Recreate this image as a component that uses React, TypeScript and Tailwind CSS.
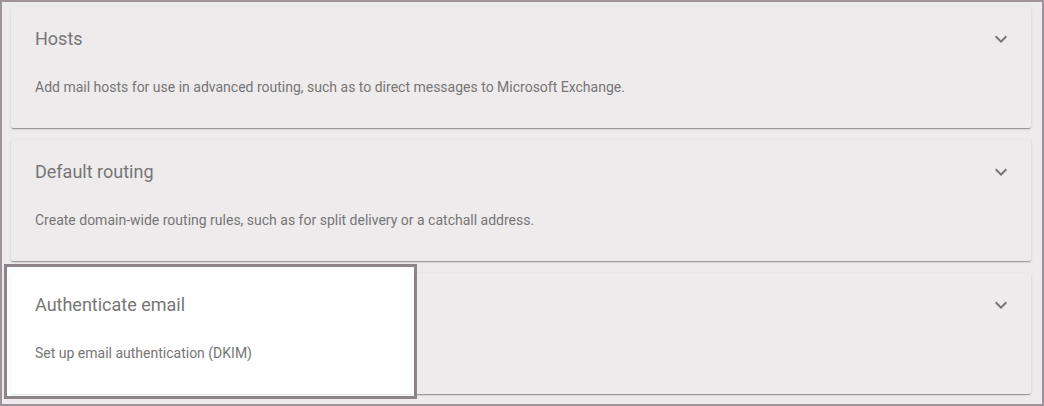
import React from "react";

const Chevron = () => (
  <svg width="24" height="24" viewBox="0 0 24 24" className="shrink-0">
    <path d="M16.59 8.59 12 13.17 7.41 8.59 6 10l6 6 6-6z" fill="#757575" />
  </svg>
);

const shadow =
  "shadow-[0_2px_1px_-1px_rgba(0,0,0,0.2),0_1px_1px_0_rgba(0,0,0,0.14),0_1px_3px_0_rgba(0,0,0,0.12)]";

function Card({
  title,
  desc,
  highlight,
}: {
  title: string;
  desc: string;
  highlight?: boolean;
}) {
  return (
    <div className={`relative h-[121px] rounded-[2px] bg-[#eeebec] ${shadow}`}>
      {highlight && (
        <div className="absolute left-[-7px] top-[-9px] w-[413px] h-[135px] border-[3px] border-[#8f8489] bg-white">
          <div className="absolute left-[4px] top-[6px] right-0 h-[121px] shadow-[0_1px_2px_rgba(0,0,0,0.12)] bg-white" />
        </div>
      )}
      <div className="relative z-10 pl-6 pr-[18px] pt-[20px]">
        <div className="flex items-center justify-between h-6">
          <div className="text-[18px] leading-6 text-[#767676]">{title}</div>
          {!highlight && <Chevron />}
        </div>
        <div className="mt-[26px] text-[14px] leading-5 text-[#767676]">{desc}</div>
      </div>
      {highlight && (
        <div className="absolute right-[18px] top-[20px] z-10">
          <Chevron />
        </div>
      )}
    </div>
  );
}

export default function App() {
  return (
    <div
      className="w-[1044px] h-[406px] border-2 border-[#9e9399] bg-[#eeebec] pl-[9px] pr-[11px] pt-[5px] flex flex-col gap-3"
      style={{ fontFamily: "Roboto, 'Noto Sans', sans-serif" }}
    >
      <Card
        title="Hosts"
        desc="Add mail hosts for use in advanced routing, such as to direct messages to Microsoft Exchange."
      />
      <Card
        title="Default routing"
        desc="Create domain-wide routing rules, such as for split delivery or a catchall address."
      />
      <Card
        title="Authenticate email"
        desc="Set up email authentication (DKIM)"
        highlight
      />
    </div>
  );
}
